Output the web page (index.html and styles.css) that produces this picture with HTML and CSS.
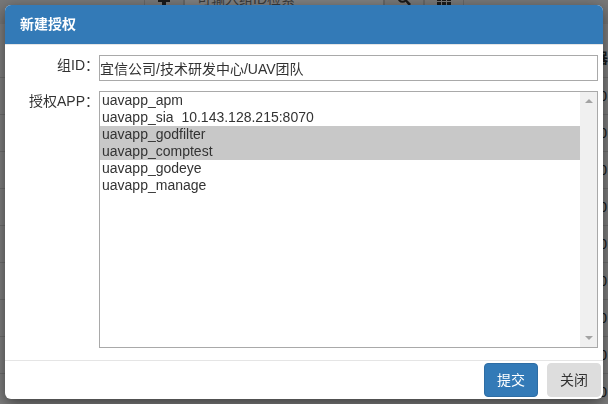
FILE: index.html
```html
<!DOCTYPE html>
<html lang="zh-CN">
<head>
<meta charset="utf-8">
<title>新建授权</title>
<link rel="stylesheet" href="styles.css">
</head>
<body>
<div class="page" inert>
  <div class="toolbar">
    <button class="tool" type="button" aria-label="新建"><svg width="14" height="14" viewBox="0 0 14 14"><path d="M5 2h4v4h4v4H9v4H5v-4H1V6h4z"/></svg></button>
    <input class="search" type="text" aria-label="检索" placeholder="可输入组ID检索">
    <button class="tool" type="button" aria-label="搜索"><svg width="14" height="14" viewBox="0 0 14 14"><circle cx="5.5" cy="5.5" r="4.2" fill="none" stroke="currentColor" stroke-width="2"/><path d="M8 9l1.500-1.500 4.500 4.500-2 2z"/></svg></button>
    <button class="tool" type="button" aria-label="全部"><svg width="14" height="14" viewBox="0 0 14 14"><path d="M0 0h4v4H0zM5 0h4v4H5zM10 0h4v4h-4zM0 5h4v4H0zM5 5h4v4H5zM10 5h4v4h-4zM0 10h4v4H0zM5 10h4v4H5zM10 10h4v4h-4z"/></svg></button>
  </div>
  <table class="grid">
    <thead><tr><th>器</th></tr></thead>
    <tbody>
      <tr><td>0</td></tr><tr><td>0</td></tr><tr><td>0</td></tr>
      <tr><td>0</td></tr><tr><td>0</td></tr><tr><td>0</td></tr>
      <tr><td>0</td></tr><tr><td>0</td></tr><tr><td>0</td></tr>
    </tbody>
  </table>
</div>
<div class="backdrop">
  <form class="modal" role="dialog" aria-labelledby="title">
    <header class="modal-header"><h1 id="title">新建授权</h1></header>
    <div class="modal-body">
      <label for="group">组ID：</label>
      <input id="group" class="field" type="text" value="宜信公司/技术研发中心/UAV团队">
      <label for="apps">授权APP：</label>
      <div class="list">
        <select id="apps" class="field" multiple>
          <option>uavapp_apm</option>
          <option>uavapp_sia&nbsp; 10.143.128.215:8070</option>
          <option selected>uavapp_godfilter</option>
          <option selected>uavapp_comptest</option>
          <option>uavapp_godeye</option>
          <option>uavapp_manage</option>
        </select>
        <div class="track" aria-hidden="true">
          <svg width="8" height="4" viewBox="0 0 8 4"><path d="M4 0l4 4H0z"/></svg>
          <svg width="8" height="4" viewBox="0 0 8 4"><path d="M0 0h8L4 4z"/></svg>
        </div>
      </div>
    </div>
    <footer class="modal-footer">
      <button class="btn primary" type="button">提交</button>
      <button class="btn" type="button">关闭</button>
    </footer>
  </form>
</div>
</body>
</html>
```
FILE: styles.css
```css
* {
  box-sizing: border-box;
}

body,
button,
input,
select {
  font-family: "Liberation Sans", "Noto Sans CJK SC", sans-serif;
  font-size: 14px;
  line-height: 20px;
  color: #333;
}

body {
  margin: 0;
  height: 100vh;
  overflow: hidden;
  background: #fff;
}

.page {
  height: 100vh;
  overflow: hidden;
}

.toolbar {
  display: flex;
  align-items: flex-end;
  height: 24px;
  padding: 0 144px 8px;
  background: #eee;
}

.tool {
  display: flex;
  align-items: center;
  justify-content: center;
  width: 40px;
  height: 34px;
  flex: none;
  padding: 0;
  border: 1px solid #ccc;
  background: #eee;
}

.tool svg {
  fill: currentColor;
}

.search {
  flex: 1;
  min-width: 0;
  height: 34px;
  padding: 6px 12px;
  border: 1px solid #ccc;
  background: #fff;
}

.grid {
  width: 100%;
  border-collapse: collapse;
}

.grid th,
.grid td {
  height: 37px;
  padding: 0 1px 0 0;
  border-bottom: 1px solid #ddd;
  text-align: right;
}

.grid th {
  height: 53px;
  padding: 16px 0 0;
}

.backdrop {
  position: fixed;
  inset: 0;
  padding: 5px;
  background: rgba(0, 0, 0, 0.5);
}

.modal {
  display: flex;
  flex-direction: column;
  height: calc(100vh - 10px);
  overflow: hidden;
  border-radius: 6px;
  background: #fff;
  box-shadow: 0 5px 15px rgba(0, 0, 0, 0.5);
}

.modal-header {
  padding: 9px 15px 10px;
  border-bottom: 1px solid #e5e5e5;
  background: #337ab7;
}

.modal-header h1 {
  margin: 0;
  font-size: 14px;
  line-height: 20px;
  color: #fff;
}

.modal-body {
  flex: 1;
  min-height: 0;
  display: grid;
  grid-template-columns: 94px 1fr;
  grid-template-rows: 26px 1fr;
  row-gap: 10px;
  padding: 10px 5px 12px 0;
}

.modal-body label {
  text-align: right;
}

.field {
  width: 100%;
  height: 100%;
  margin: 0;
  padding: 0;
  border: 1px solid #a9a9a9;
  border-radius: 0;
  outline: none;
  background: #fff;
}

.list {
  position: relative;
  min-height: 0;
}

select.field {
  overflow: hidden;
}

option {
  min-height: 17px;
  padding: 0 2px;
  line-height: 17px;
}

option:checked {
  color: #333;
  background: #c8c8c8;
}

.track {
  position: absolute;
  inset: 1px 1px 1px auto;
  display: flex;
  flex-direction: column;
  align-items: center;
  justify-content: space-between;
  width: 17px;
  padding: 7px 0;
  background: #f0f0f0;
}

.track svg {
  fill: #a3a3a3;
}

.modal-footer {
  display: flex;
  justify-content: flex-end;
  gap: 9px;
  padding: 2px;
  border-top: 1px solid #e5e5e5;
}

.btn {
  padding: 6px 12px;
  border: 1px solid #ddd;
  border-radius: 4px;
  background: #ddd;
}

.btn.primary {
  border-color: #2e6da4;
  background: #337ab7;
  color: #fff;
}
```
